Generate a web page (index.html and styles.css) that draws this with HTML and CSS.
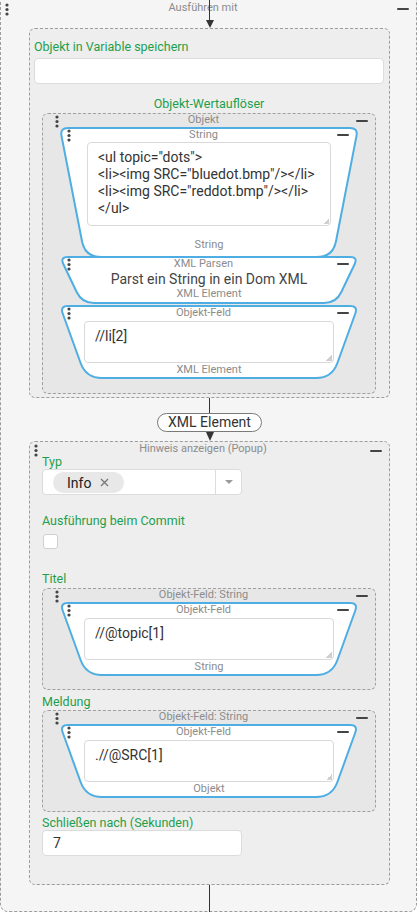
FILE: index.html
```html
<!DOCTYPE html>
<html lang="de">
<head>
    <meta charset="UTF-8">
    <meta name="viewport" content="width=device-width, initial-scale=1.0">
    <title>Ausführen mit</title>
    <link rel="stylesheet" href="styles.css">
</head>
<body>
    <div class="frame">
        <div class="head head-frame">
            <svg class="dots" viewBox="0 0 4 13"><circle cx="2" cy="2" r="1.6"/><circle cx="2" cy="6.5" r="1.6"/><circle cx="2" cy="11" r="1.6"/></svg>
            <span class="head-title">Ausführen mit</span>
            <span class="minus"></span>
        </div>
        <div class="link link-top">
            <span class="line"></span>
            <span class="arrow"></span>
        </div>

        <!-- Objekt in Variable speichern -->
        <div class="block block-store">
            <div class="field-label">Objekt in Variable speichern</div>
            <div class="input input-wide"></div>
            <div class="field-label centered">Objekt-Wertauflöser</div>

            <div class="group group-obj">
                <div class="head head-group">
                    <svg class="dots" viewBox="0 0 4 13"><circle cx="2" cy="2" r="1.6"/><circle cx="2" cy="6.5" r="1.6"/><circle cx="2" cy="11" r="1.6"/></svg>
                    <span class="head-title">Objekt</span>
                    <span class="minus"></span>
                </div>

                <div class="trap trap-string">
                    <svg class="trap-shape" viewBox="0 0 300 131"><path d="M9,1 H291 Q299,1 297.5,8.9 L277,114.3 Q274,130 258,130 H42 Q26,130 23,114.3 L2.5,8.9 Q1,1 9,1 Z"/></svg>
                    <div class="head head-trap">
                        <svg class="dots" viewBox="0 0 4 13"><circle cx="2" cy="2" r="1.6"/><circle cx="2" cy="6.5" r="1.6"/><circle cx="2" cy="11" r="1.6"/></svg>
                        <span class="head-title">String</span>
                        <span class="minus"></span>
                    </div>
                    <div class="code code-string">&lt;ul topic="dots"&gt;
&lt;li&gt;&lt;img SRC="bluedot.bmp"/&gt;&lt;/li&gt;
&lt;li&gt;&lt;img SRC="reddot.bmp"/&gt;&lt;/li&gt;
&lt;/ul&gt;</div>
                    <div class="out out-string">String</div>
                </div>

                <div class="trap trap-parse">
                    <svg class="trap-shape" viewBox="0 0 300 48"><path d="M9,1 H291 Q299,1 295.6,8.2 L282.2,36.2 Q277,47 265,47 H35 Q23,47 17.8,36.2 L4.4,8.2 Q1,1 9,1 Z"/></svg>
                    <div class="head head-trap">
                        <svg class="dots" viewBox="0 0 4 13"><circle cx="2" cy="2" r="1.6"/><circle cx="2" cy="6.5" r="1.6"/><circle cx="2" cy="11" r="1.6"/></svg>
                        <span class="head-title">XML Parsen</span>
                        <span class="minus"></span>
                    </div>
                    <div class="desc">Parst ein String in ein Dom XML</div>
                    <div class="out">XML Element</div>
                </div>

                <div class="trap trap-field trap-after">
                    <svg class="trap-shape" viewBox="0 0 300 74"><path d="M9,1 H291 Q299,1 296.3,8.5 L278.4,58 Q273,73 257,73 H43 Q27,73 21.6,58 L3.7,8.5 Q1,1 9,1 Z"/></svg>
                    <div class="head head-trap">
                        <svg class="dots" viewBox="0 0 4 13"><circle cx="2" cy="2" r="1.6"/><circle cx="2" cy="6.5" r="1.6"/><circle cx="2" cy="11" r="1.6"/></svg>
                        <span class="head-title">Objekt-Feld</span>
                        <span class="minus"></span>
                    </div>
                    <div class="code code-field">//li[2]</div>
                    <div class="out">XML Element</div>
                </div>
            </div>
        </div>

        <div class="link link-mid">
            <span class="line"></span>
            <span class="pill">XML Element</span>
            <span class="arrow"></span>
        </div>

        <!-- Hinweis anzeigen -->
        <div class="block block-popup">
            <div class="head head-block">
                <svg class="dots" viewBox="0 0 4 13"><circle cx="2" cy="2" r="1.6"/><circle cx="2" cy="6.5" r="1.6"/><circle cx="2" cy="11" r="1.6"/></svg>
                <span class="head-title">Hinweis anzeigen (Popup)</span>
                <span class="minus"></span>
            </div>
            <div class="block-body">
                <div class="field-label">Typ</div>
                <div class="select">
                    <div class="select-value">
                        <span class="chip">Info
                            <svg class="chip-x" viewBox="0 0 9 9"><path d="M1,1 L8,8 M8,1 L1,8"/></svg>
                        </span>
                    </div>
                    <div class="select-caret"><span class="caret"></span></div>
                </div>

                <div class="field-label label-commit">Ausführung beim Commit</div>
                <div class="checkbox"></div>

                <div class="field-label label-title">Titel</div>
                <div class="group group-field">
                    <div class="head head-group">
                        <svg class="dots" viewBox="0 0 4 13"><circle cx="2" cy="2" r="1.6"/><circle cx="2" cy="6.5" r="1.6"/><circle cx="2" cy="11" r="1.6"/></svg>
                        <span class="head-title">Objekt-Feld: String</span>
                        <span class="minus"></span>
                    </div>
                    <div class="trap trap-field">
                        <svg class="trap-shape" viewBox="0 0 300 74"><path d="M9,1 H291 Q299,1 296.3,8.5 L278.4,58 Q273,73 257,73 H43 Q27,73 21.6,58 L3.7,8.5 Q1,1 9,1 Z"/></svg>
                        <div class="head head-trap">
                            <svg class="dots" viewBox="0 0 4 13"><circle cx="2" cy="2" r="1.6"/><circle cx="2" cy="6.5" r="1.6"/><circle cx="2" cy="11" r="1.6"/></svg>
                            <span class="head-title">Objekt-Feld</span>
                            <span class="minus"></span>
                        </div>
                        <div class="code code-field">//@topic[1]</div>
                        <div class="out">String</div>
                    </div>
                </div>

                <div class="field-label label-message">Meldung</div>
                <div class="group group-field group-message">
                    <div class="head head-group">
                        <svg class="dots" viewBox="0 0 4 13"><circle cx="2" cy="2" r="1.6"/><circle cx="2" cy="6.5" r="1.6"/><circle cx="2" cy="11" r="1.6"/></svg>
                        <span class="head-title">Objekt-Feld: String</span>
                        <span class="minus"></span>
                    </div>
                    <div class="trap trap-field">
                        <svg class="trap-shape" viewBox="0 0 300 74"><path d="M9,1 H291 Q299,1 296.3,8.5 L278.4,58 Q273,73 257,73 H43 Q27,73 21.6,58 L3.7,8.5 Q1,1 9,1 Z"/></svg>
                        <div class="head head-trap">
                            <svg class="dots" viewBox="0 0 4 13"><circle cx="2" cy="2" r="1.6"/><circle cx="2" cy="6.5" r="1.6"/><circle cx="2" cy="11" r="1.6"/></svg>
                            <span class="head-title">Objekt-Feld</span>
                            <span class="minus"></span>
                        </div>
                        <div class="code code-field">.//@SRC[1]</div>
                        <div class="out">Objekt</div>
                    </div>
                </div>

                <div class="field-label label-close">Schließen nach (Sekunden)</div>
                <div class="input input-number">7</div>
            </div>
        </div>

        <div class="link link-end">
            <span class="line"></span>
        </div>
    </div>
</body>
</html>
```

FILE: styles.css
```css
body {
    margin: 0;
    font-family: Roboto, "Noto Sans", Arial, sans-serif;
    color: #444;
    background-color: #fff;
    overflow: hidden;
}

/* outer "Ausführen mit" frame */
.frame {
    height: 913px;
    margin: -1px 1px 0 0;
    box-sizing: border-box;
    border: 1px dashed #9c9c9c;
    border-radius: 0 0 8px 8px;
    background-color: #f5f5f5;
}

/* header rows: drag dots, title, minus */
.head {
    display: grid;
    grid-template-columns: 1fr auto 1fr;
    align-items: start;
}
.head-title {
    font-size: 11px;
    line-height: 12px;
    color: #8c8c8c;
    white-space: nowrap;
}
.dots {
    display: block;
    width: 4px;
    height: 13px;
    fill: #444;
}
.minus {
    justify-self: end;
    width: 12px;
    height: 2px;
    border-radius: 1px;
    background-color: #444;
}
.head-frame {
    height: 14px;
    padding: 2px 7px 0 4px;
    box-sizing: border-box;
}
.head-frame .dots { margin-top: 1px; }
.head-frame .minus { margin-top: 6px; }
.head-frame .head-title { margin-right: 8px; }

.head-group {
    height: 13px;
    padding: 0 7px 0 12px;
}
.head-group .dots { margin-top: 1px; }
.head-group .minus { margin-top: 6px; }
.head-group .head-title { margin-right: 16px; }

.head-block {
    height: 13px;
    padding: 1px 7px 0 4px;
    box-sizing: border-box;
}
.head-block .dots { margin-top: 1px; }
.head-block .minus { margin-top: 7px; }
.head-block .head-title { margin-right: 10px; }

.head-trap {
    height: 14px;
    padding: 2px 10px 0 8px;
    box-sizing: border-box;
}
.head-trap .minus { margin-top: 5px; }
.head-trap .head-title { margin-right: 9px; }

/* connectors */
.link {
    display: flex;
    flex-direction: column;
    align-items: center;
    margin: 0 26px 0 28px;
}
.link-top {
    height: 28px;
    margin-top: -14px;
}
.line {
    width: 1px;
    flex: 1;
    background-color: #333;
}
.arrow {
    width: 0;
    height: 0;
    border-left: 4px solid transparent;
    border-right: 4px solid transparent;
    border-top: 8px solid #353535;
}
.link-mid .line {
    flex: none;
    height: 15px;
}
.link-mid .arrow {
    border-top-width: 9px;
}
.pill {
    height: 19px;
    box-sizing: border-box;
    padding: 0 10px;
    border: 1px solid #7a7a7a;
    border-radius: 10px;
    background-color: #fff;
    font-size: 14px;
    line-height: 17px;
    color: #333;
}
.link-end {
    height: 27px;
}

/* blocks */
.block {
    margin: 0 26px 0 28px;
    border: 1px dashed #9c9c9c;
    border-radius: 6px;
    background-color: #eee;
}
.block-store {
    padding: 11px 5px 3px 4px;
}
.block-body {
    padding: 0 13px 28px 12px;
}

.field-label {
    font-size: 12.5px;
    line-height: 14px;
    color: #1f9e4b;
}
.field-label.centered {
    margin-top: 13px;
    text-align: center;
}
.label-commit { margin-top: 19px; }
.label-title { margin-top: 23px; }
.label-message { margin-top: 5px; }
.label-close { margin-top: 4px; }

.input {
    height: 26px;
    box-sizing: border-box;
    border: 1px solid #dcdcdc;
    border-radius: 4px;
    background-color: #fff;
}
.input-wide {
    margin-top: 4px;
}
.input-number {
    width: 200px;
    padding-left: 10px;
    font-size: 14px;
    line-height: 24px;
    color: #333;
}

/* dashed groups */
.group {
    border: 1px dashed #a0a0a0;
    border-radius: 6px;
    background-color: #e7e7e7;
}
.group-obj {
    margin: 2px 8px 0;
    padding-bottom: 14px;
}
.group-field {
    margin-top: 2px;
    padding-bottom: 13px;
}
.group-message {
    margin-top: 1px;
}

/* trapezoid blocks */
.trap {
    position: relative;
    isolation: isolate;
    width: 300px;
    margin-left: 16px;
    box-sizing: border-box;
}
.trap-shape {
    position: absolute;
    left: 0;
    top: 0;
    width: 100%;
    height: 100%;
    z-index: -1;
    fill: #fff;
    stroke: #4eaee4;
    stroke-width: 2;
}
.trap-string { height: 131px; }
.trap-parse {
    height: 48px;
    margin-top: -2px;
}
.trap-field { height: 74px; }
.trap-after { margin-top: 1px; }

.code {
    position: relative;
    box-sizing: border-box;
    border: 1px solid #d9d9d9;
    border-radius: 4px;
    background-color: #fff;
    padding: 6px 10px;
    font-size: 14px;
    line-height: 17px;
    color: #333;
    white-space: pre;
}
.code::after {
    content: "";
    position: absolute;
    right: 1px;
    bottom: 1px;
    width: 6px;
    height: 6px;
    background: linear-gradient(135deg, transparent 50%, #cfcfcf 50%);
}
.code-string {
    height: 84px;
    margin: 1px 28px 0;
}
.code-field {
    height: 42px;
    margin: 2px 25px 0;
}

.out {
    font-size: 11px;
    line-height: 12px;
    color: #8c8c8c;
    text-align: center;
}
.out-string { margin-top: 13px; }
.trap-field .out { margin-top: 1px; }

.desc {
    margin-top: 1px;
    font-size: 14px;
    line-height: 17px;
    color: #444;
    text-align: center;
}

/* select */
.select {
    display: flex;
    width: 200px;
    height: 26px;
    box-sizing: border-box;
    border: 1px solid #dcdcdc;
    border-radius: 4px;
    background-color: #fff;
}
.select-value {
    flex: 1;
    padding: 2px 0 0 10px;
    border-right: 1px solid #dcdcdc;
}
.chip {
    display: inline-flex;
    align-items: center;
    height: 21px;
    padding: 0 15px 0 14px;
    border-radius: 11px;
    background-color: #e8e8e8;
    font-size: 14px;
    color: #222;
}
.chip-x {
    width: 9px;
    height: 9px;
    margin-left: 9px;
    stroke: #7a7a7a;
    stroke-width: 1.4;
}
.select-caret {
    width: 25px;
    display: flex;
    align-items: center;
    justify-content: center;
}
.caret {
    width: 0;
    height: 0;
    border-left: 4px solid transparent;
    border-right: 4px solid transparent;
    border-top: 4px solid #9a9a9a;
}

.checkbox {
    width: 15px;
    height: 15px;
    margin: 6px 0 0 1px;
    box-sizing: border-box;
    border: 1px solid #cfcfcf;
    border-radius: 3px;
    background-color: #fff;
}
```
